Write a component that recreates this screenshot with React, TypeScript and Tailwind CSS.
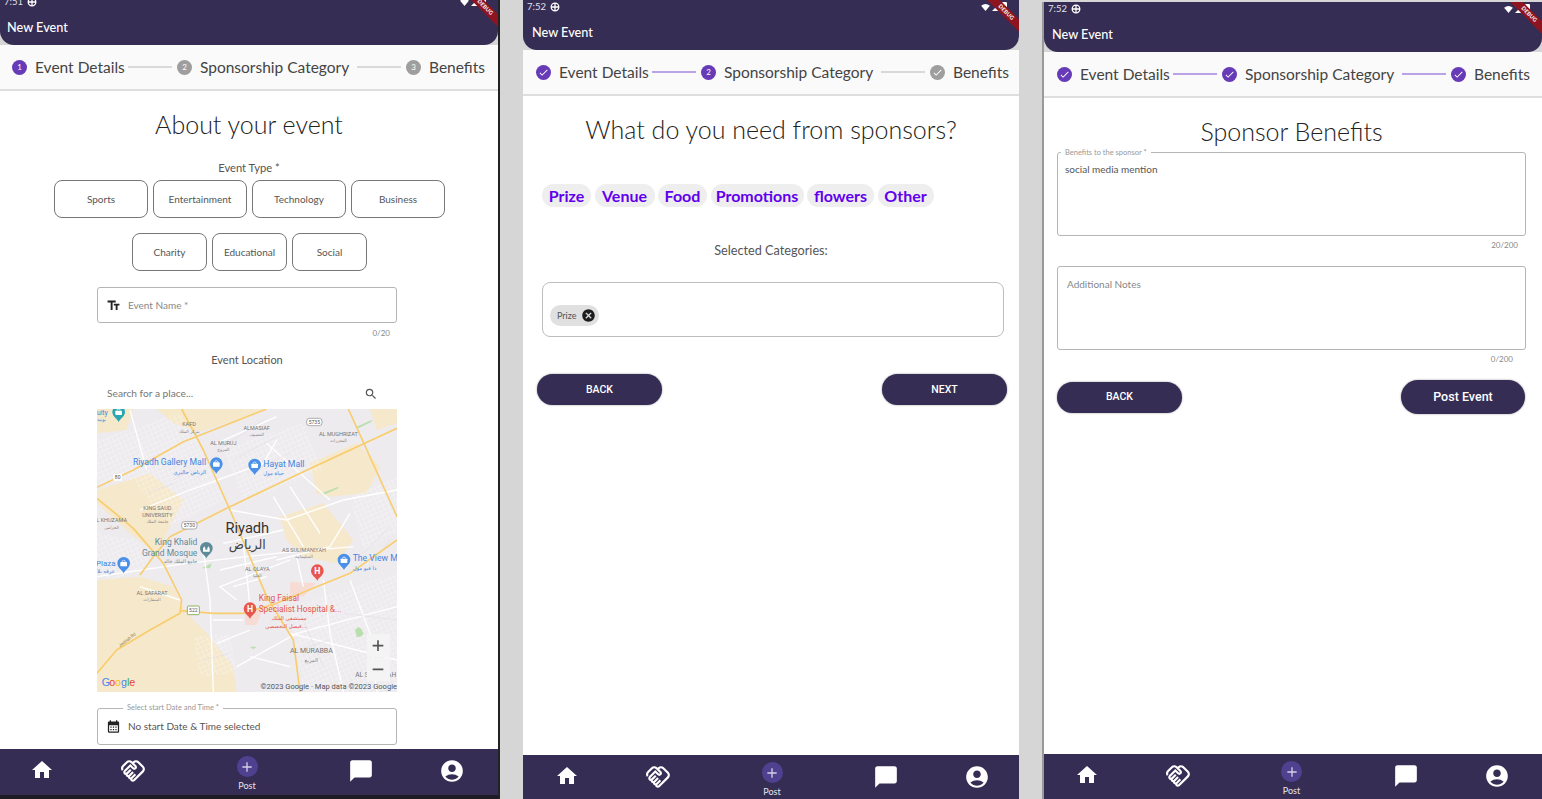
import { MdAccountCircle, MdAdd, MdCalendarMonth, MdCancel, MdChatBubble, MdCheck, MdHome, MdOutlineHandshake, MdSearch, MdTextFields } from "react-icons/md";
import type { ReactNode } from "react";

type StepState = "done" | "active" | "todo" | "grey";

const stepLabels = ["Event Details", "Sponsorship Category", "Benefits"];
const labelWidths = ["w-[88px]", "w-[152px]", "w-[56px]"];

function StepDot({ state, n }: { state: StepState; n: number }) {
  const bg = state === "done" || state === "active" ? "bg-[#673ab7]" : "bg-[#9e9e9e]";
  return (
    <span className={`grid h-[15px] w-[15px] shrink-0 place-items-center rounded-full text-[8px] text-white ${bg}`}>
      {state === "done" || state === "grey" ? <MdCheck className="h-[11px] w-[11px]" /> : n}
    </span>
  );
}

function Stepper({ states, lines, pad }: { states: StepState[]; lines: boolean[]; pad: string }) {
  return (
    <div className={`flex h-[46px] shrink-0 items-center border-b-2 border-[#dedede] bg-[#fafafa] ${pad}`}>
      {stepLabels.map((label, i) => (
        <div key={label} className="flex items-center">
          <StepDot state={states[i]} n={i + 1} />
          <span className={`ml-2 mt-[2px] whitespace-nowrap text-[15.5px] text-[#444] ${labelWidths[i]}`}>{label}</span>
          {i < 2 && <span className={`mx-[5px] h-[1.5px] w-[44px] ${lines[i] ? "bg-[#b9a3e6]" : "bg-[#d9d9d9]"}`} />}
        </div>
      ))}
    </div>
  );
}

function Ribbon() {
  return (
    <div className="absolute right-[-12px] top-[8px] flex h-[9px] w-[50px] rotate-45 items-center justify-center bg-[#8e1520] text-[5.5px] font-bold tracking-wide text-white">
      DEBUG
    </div>
  );
}

function Header({ time, titlePad }: { time: string; titlePad: string }) {
  return (
    <header className="relative h-[50px] shrink-0 overflow-hidden rounded-b-[14px] bg-[#352d54] text-white">
      <div className="flex h-[14px] items-center pl-[4px] text-[9.5px] text-[#e4e2ea]">
        <span>{time}</span>
        <svg viewBox="0 0 10 10" className="ml-[4px] h-[10px] w-[10px]" fill="none" stroke="#fff" strokeWidth="1.3">
          <circle cx="5" cy="5" r="3.8" />
          <path d="M1 5h8M5 1v8" />
        </svg>
        <div className="ml-auto mr-[12px] flex items-center gap-[2px]">
          <svg viewBox="0 0 10 8" className="h-[7px] w-[9px]" fill="#fff"><path d="M0 2Q5-2 10 2L5 8Z" /></svg>
          <svg viewBox="0 0 8 8" className="h-[8px] w-[8px]" fill="#fff"><path d="M8 0V8H0Z" /></svg>
          <span className="h-[11px] w-[5px] rounded-[1px] bg-white" />
        </div>
      </div>
      <div className={`pt-[9px] text-[12.7px] font-medium leading-[18px] ${titlePad}`}>New Event</div>
      <Ribbon />
    </header>
  );
}

function NavIcon({ children, w }: { children: ReactNode; w: string }) {
  return <div className={`flex shrink-0 justify-center ${w}`}>{children}</div>;
}

function BottomNav({ className }: { className: string }) {
  return (
    <nav className={`flex shrink-0 items-start justify-center overflow-hidden bg-[#352d54] pt-[9px] text-white ${className}`}>
      <NavIcon w="w-[91px]"><MdHome className="h-[24px] w-[24px]" /></NavIcon>
      <NavIcon w="w-[91px]"><MdOutlineHandshake className="h-[26px] w-[26px]" /></NavIcon>
      <NavIcon w="w-[137px]">
        <div className="-mt-[2px] flex flex-col items-center">
          <span className="grid h-[21px] w-[21px] place-items-center rounded-full bg-[#4f4190]">
            <MdAdd className="h-[16px] w-[16px] text-[#d5d0e6]" />
          </span>
          <span className="mt-[3px] text-[9px] leading-[11px] text-[#e6e4ec]">Post</span>
        </div>
      </NavIcon>
      <NavIcon w="w-[91px]"><MdChatBubble className="h-[26px] w-[26px]" /></NavIcon>
      <NavIcon w="w-[91px]"><MdAccountCircle className="h-[26px] w-[26px]" /></NavIcon>
    </nav>
  );
}

function TypeButton({ label, w }: { label: string; w: string }) {
  return (
    <div className={`grid h-[38px] place-items-center rounded-[8px] border border-[#777] text-[10px] text-[#555] ${w}`}>
      {label}
    </div>
  );
}

function Pin({ x, y, color, children }: { x: number; y: number; color: string; children?: ReactNode }) {
  return (
    <g transform={`translate(${x} ${y})`}>
      <path d="M0 28C-5 17-19 12-19-2A19 19 0 1 1 19-2C19 12 5 17 0 28Z" fill={color} />
      {children}
    </g>
  );
}

const Bag = () => (
  <>
    <rect x="-10" y="-6" width="20" height="13" rx="2" fill="#fff" />
    <path d="M-5-6A5 5 0 0 1 5-6" fill="none" stroke="#fff" strokeWidth="2" />
  </>
);

const HLetter = () => (
  <text x="0" y="9" textAnchor="middle" fontSize="26" fontWeight="700" fill="#fff">H</text>
);

const blueText = { fill: "#3f86e0", fontSize: 26 };

function RiyadhMap() {
  const ar = "'DejaVu Sans', sans-serif";
  return (
    <svg viewBox="21 27 900 849" className="block h-[283px] w-[300px]" fontFamily="Roboto, sans-serif">
      <defs>
        <pattern id="blocks" width="14" height="14" patternUnits="userSpaceOnUse" patternTransform="rotate(-24)">
          <path d="M0 0H14M0 0V14" stroke="#fbfafb" strokeWidth="2" fill="none" />
        </pattern>
      </defs>
      <rect x="21" y="27" width="900" height="849" fill="#eeebef" />
      {/* sand */}
      <g fill="#f6e8ca">
        <path d="M21 540 150 530 250 560 290 640 350 700 430 800 440 876H21Z" />
        <path d="M21 270 180 220 280 300 240 380 200 460 120 400 21 310Z" />
        <path d="M570 350 700 310 790 420 740 490 640 470 590 420Z" />
        <path d="M660 190 800 130 870 200 830 280 720 290 680 280Z" />
        <path d="M21 27H130L110 90 21 100Z" />
        <path d="M200 27H520L440 60 330 95 250 70Z" />
        <path d="M840 27H921V70L860 90Z" />
      </g>
      {/* housing blocks */}
      <g fill="url(#blocks)">
        <path d="M21 120 270 40 340 150 400 300 240 380 130 240 21 250Z" />
        <path d="M400 140 640 70 700 210 460 310Z" />
        <path d="M780 290 921 230V400L820 450Z" />
        <path d="M600 620 921 520V876H640Z" />
        <path d="M310 710 420 700 440 820 330 830Z" />
        <path d="M21 400 140 420 190 500 60 540 21 520Z" />
      </g>
      <path d="M600 545 680 550 640 590 600 590Z" fill="#f7dcd6" />
      <path d="M465 640 520 620 500 675 465 675Z" fill="#f7dcd6" />
      <g fill="#b9dfae">
        <path d="M335 505 365 490 360 505Z" />
        <path d="M695 280 745 260 745 265 700 285Z" />
        <path d="M800 80 845 60 845 65 805 85Z" />
        <path d="M795 690Q810 670 820 700 815 715 800 710Z" />
        <path d="M480 740H500L490 748Z" />
      </g>
      {/* streets */}
      <g fill="none" stroke="#fff" strokeWidth="4">
        <path d="M21 530 290 490 560 460 790 440" />
        <path d="M150 330 300 270 520 190 560 120" />
        <path d="M420 330 590 360 760 300 921 270" />
        <path d="M340 450 360 600 370 876" />
        <path d="M460 430 480 620" />
        <path d="M560 480 720 440 780 340" />
        <path d="M700 540 720 700 760 876" />
        <path d="M440 600 390 560 600 480" />
        <path d="M440 800 620 700 921 620" />
        <path d="M530 130 720 300" />
        <path d="M380 130 560 50" />
        <path d="M600 700 921 780" />
        <path d="M480 770 600 800" />
        <path d="M150 560 270 600" />
        <path d="M780 540 840 700 860 876" />
        <path d="M120 30 170 210" />
        <path d="M620 470 640 560" />
        <path d="M390 510 560 470M400 430 580 390M430 560 530 530M370 660 460 660M380 730 480 690M550 290 640 440M600 260 690 400" />
      </g>
      <g fill="none" stroke="#e4e0e4" strokeWidth="2">
        <path d="M400 140 520 60M430 180 560 110M470 220 600 160M330 240 280 190M250 240 310 210M170 280 250 250M560 640 700 620M590 760 720 720M630 640 700 800M760 640 921 660M800 480 900 380M840 500 900 420M340 780 420 760" />
      </g>
      {/* highways */}
      <g fill="none" stroke="#f8cd6e" strokeWidth="5" strokeLinejoin="round">
        <path d="M775 27 921 350" />
        <path d="M21 262 130 210 280 125 530 27" />
        <path d="M240 410 420 320 640 215 921 85" />
        <path d="M275 27 340 150 420 330 530 590 610 720 630 876" />
        <path d="M21 295 130 385 220 490 275 600 270 640 180 690 80 750 21 820" />
        <path d="M270 632 370 640 460 640 560 610 680 560 780 520 921 420" />
        <path d="M150 525 190 470 240 410" />
      </g>
      {/* labels */}
      <g fill="#757575" fontSize="16.5">
        <text x="297" y="78" textAnchor="middle">KAFD</text>
        <text x="400" y="134" textAnchor="middle">AL MURUJ</text>
        <text x="500" y="90" textAnchor="middle">ALMASIAF</text>
        <text x="745" y="109" textAnchor="middle">AL MUGHRIZAT</text>
        <text x="202" y="330" textAnchor="middle">KING SAUD</text>
        <text x="202" y="350" textAnchor="middle">UNIVERSITY</text>
        <text x="65" y="367" textAnchor="middle">L KHUZAMA</text>
        <text x="642" y="456" textAnchor="middle">AS SULIMANIYAH</text>
        <text x="502" y="514" textAnchor="middle">AL OLAYA</text>
        <text x="186" y="585" textAnchor="middle">AL SAFARAT</text>
        <text x="664" y="758" textAnchor="middle" fontSize="21">AL MURABBA</text>
        <text x="857" y="830" textAnchor="middle" fontSize="20">AL SINAYYAH</text>
      </g>
      <g fill="#8a8a8a" fontSize="13" fontFamily={ar}>
        <text x="297" y="100" textAnchor="middle">مركز الملك</text>
        <text x="400" y="154" textAnchor="middle">المروج</text>
        <text x="500" y="108" textAnchor="middle">المصيف</text>
        <text x="745" y="127" textAnchor="middle">المغرزات</text>
        <text x="202" y="370" textAnchor="middle">جامعة الملك</text>
        <text x="65" y="386" textAnchor="middle">الخزامى</text>
        <text x="642" y="473" textAnchor="middle">السليمانية</text>
        <text x="502" y="532" textAnchor="middle">العليا</text>
        <text x="186" y="604" textAnchor="middle">السفارات</text>
        <text x="664" y="785" textAnchor="middle" fontSize="16">المربع</text>
      </g>
      <text x="472" y="398" textAnchor="middle" fontSize="44" fill="#333">Riyadh</text>
      <text x="472" y="447" textAnchor="middle" fontSize="38" fill="#444" fontFamily={ar}>الرياض</text>
      <text x="348" y="196" textAnchor="end" {...blueText}>Riyadh Gallery Mall</text>
      <text x="348" y="222" textAnchor="end" {...blueText} fontSize="16" fontFamily={ar}>الرياض جاليري</text>
      <text x="520" y="200" {...blueText}>Hayat Mall</text>
      <text x="520" y="224" {...blueText} fontSize="16" fontFamily={ar}>حياة مول</text>
      <text x="788" y="483" {...blueText}>The View M</text>
      <text x="788" y="510" {...blueText} fontSize="16" fontFamily={ar}>ذا فيو مول</text>
      <text x="18" y="497" {...blueText} fontSize="24">Plaza</text>
      <text x="21" y="520" {...blueText} fontSize="16" fontFamily={ar}>عرقه بلا</text>
      <text x="21" y="45" {...blueText} fontSize="20">uity</text>
      <text x="21" y="64" {...blueText} fontSize="14" fontFamily={ar}>بوتيه</text>
      <text x="322" y="436" textAnchor="end" fontSize="25.5" fill="#5f8a9a">King Khalid</text>
      <text x="322" y="467" textAnchor="end" fontSize="25.5" fill="#5f8a9a">Grand Mosque</text>
      <text x="322" y="490" textAnchor="end" fontSize="15" fill="#5f8a9a" fontFamily={ar}>جامع الملك خالد</text>
      <text x="506" y="604" fontSize="25" fill="#e2574c">King Faisal</text>
      <text x="506" y="635" fontSize="25" fill="#e2574c">Specialist Hospital &amp;...</text>
      <text x="650" y="660" textAnchor="end" fontSize="16" fill="#e2574c" fontFamily={ar}>مستشفى الملك</text>
      <text x="650" y="684" textAnchor="end" fontSize="16" fill="#e2574c" fontFamily={ar}>فيصل التخصصي...</text>
      {/* shields */}
      <g fontSize="15" textAnchor="middle" fill="#555">
        <rect x="650" y="55" width="46" height="22" rx="8" fill="#fff" stroke="#888" strokeWidth="2" />
        <text x="673" y="71">5735</text>
        <rect x="275" y="365" width="46" height="22" rx="8" fill="#fff" stroke="#888" strokeWidth="2" />
        <text x="298" y="381">5730</text>
        <rect x="292" y="618" width="36" height="26" rx="3" fill="#fff" stroke="#8fb25a" strokeWidth="3" />
        <text x="310" y="637">522</text>
        <rect x="70" y="222" width="26" height="20" fill="#fff" />
        <text x="83" y="238">80</text>
      </g>
      <text x="90" y="742" fontSize="13" fill="#8a7440" transform="rotate(-38 90 742)">Jeddah Rd</text>
      {/* pins */}
      <Pin x={379} y={193} color="#4a90e8"><Bag /></Pin>
      <Pin x={494} y={197} color="#4a90e8"><Bag /></Pin>
      <Pin x={762} y={482} color="#4a90e8"><Bag /></Pin>
      <Pin x={101} y={492} color="#4a90e8"><Bag /></Pin>
      <Pin x={86} y={38} color="#2aa6b0"><Bag /></Pin>
      <Pin x={349} y={447} color="#5f8a9a">
        <path d="M-10 8V-2L-6-8-3-2V2H3V-2L6-8 10-2V8Z" fill="#fff" />
      </Pin>
      <Pin x={682} y={514} color="#e8574f"><HLetter /></Pin>
      <Pin x={480} y={628} color="#e8574f"><HLetter /></Pin>
      {/* zoom controls */}
      <rect x="830" y="702" width="70" height="70" fill="#f4f4f4" />
      <rect x="830" y="774" width="70" height="70" fill="#f4f4f4" />
      <path d="M848 737H880M864 721V753M848 808H880" stroke="#555" strokeWidth="5" />
      {/* logo + credit */}
      <g fontSize="32" fontWeight="500" fontFamily="'Liberation Sans', sans-serif">
        <text x="35" y="857" fill="#4285f4">G</text>
        <text x="58" y="857" fill="#ea4335">o</text>
        <text x="75" y="857" fill="#fbbc05">o</text>
        <text x="93" y="857" fill="#4285f4">g</text>
        <text x="111" y="857" fill="#34a853">l</text>
        <text x="118" y="857" fill="#ea4335">e</text>
      </g>
      <text x="921" y="868" textAnchor="end" fontSize="22.7" fill="#555">©2023 Google · Map data ©2023 Google</text>
    </svg>
  );
}

function EventDetails() {
  const row1 = ["Sports", "Entertainment", "Technology", "Business"];
  const row2 = ["Charity", "Educational", "Social"];
  return (
    <main className="flex flex-1 flex-col items-center overflow-hidden bg-white">
      <h1 className="mt-[15px] text-[25px] font-light leading-[36px] text-[#222]">About your event</h1>
      <p className="mt-[18px] text-[11.2px] leading-[16px] text-[#555]">Event Type *</p>
      <div className="ml-[1px] mt-[4px] flex gap-[5px]">
        {row1.map((t) => <TypeButton key={t} label={t} w="w-[94px]" />)}
      </div>
      <div className="ml-[1px] mt-[15px] flex gap-[5px]">
        {row2.map((t) => <TypeButton key={t} label={t} w="w-[75px]" />)}
      </div>
      <div className="mr-[4px] flex flex-col items-center">
        <div className="mt-[16px] flex h-[36px] w-[300px] items-center rounded-[3px] border border-[#b5b5b5] pl-[8px] text-[10px] text-[#888]">
          <MdTextFields className="h-[15px] w-[15px] text-[#222]" />
          <span className="ml-[7px]">Event Name *</span>
        </div>
        <p className="mt-[5px] w-[300px] pr-[7px] text-right text-[8px] leading-[10px] text-[#888]">0/20</p>
        <p className="mt-[14px] text-[11px] leading-[16px] text-[#555]">Event Location</p>
        <div className="mt-[17px] flex h-[18px] w-[300px] items-center pl-[10px] pr-[19px] text-[10.2px] text-[#777]">
          <span>Search for a place...</span>
          <MdSearch className="ml-auto h-[14px] w-[14px] text-[#555]" />
        </div>
        <div className="mt-[6px]"><RiyadhMap /></div>
        <div className="relative mt-[16px] flex h-[37px] w-[300px] items-center rounded-[3px] border border-[#b5b5b5] pl-[8px] text-[10px] text-[#555]">
          <span className="absolute left-[25px] top-[-6px] bg-white px-[4px] text-[7.5px] leading-[10px] text-[#999]">Select start Date and Time *</span>
          <MdCalendarMonth className="h-[15px] w-[15px] text-[#222]" />
          <span className="ml-[7px]">No start Date &amp; Time selected</span>
        </div>
      </div>
    </main>
  );
}

function PillButton({ label, className }: { label: string; className: string }) {
  return (
    <div className={`grid place-items-center rounded-full bg-[#352d54] font-['Roboto',sans-serif] font-medium text-white shadow-[0_0_2px_rgba(0,0,0,.45)] ${className}`}>
      {label}
    </div>
  );
}

function SponsorshipCategory() {
  const chips = [
    ["Prize", "w-[49px]"],
    ["Venue", "w-[60px]"],
    ["Food", "w-[49px]"],
    ["Promotions", "w-[93px]"],
    ["flowers", "w-[67px]"],
    ["Other", "w-[56px]"],
  ];
  return (
    <main className="flex flex-1 flex-col bg-white">
      <h1 className="mt-[15px] text-center text-[25px] font-light leading-[36px] text-[#222]">What do you need from sponsors?</h1>
      <div className="ml-[19px] mt-[37px] flex gap-[3.5px]">
        {chips.map(([c, w]) => (
          <span key={c} className={`grid h-[23px] place-items-center rounded-full bg-[#eeeeee] text-[16px] font-bold text-[#6200ee] ${w}`}>{c}</span>
        ))}
      </div>
      <p className="mt-[34px] text-center text-[12.7px] leading-[18px] text-[#555]">Selected Categories:</p>
      <div className="ml-[19px] mr-[15px] mt-[23px] flex h-[55px] items-end rounded-[8px] border border-[#bdbdbd] px-[7px] pb-[10px]">
        <span className="flex h-[21px] w-[49px] items-center justify-between rounded-full bg-[#e0e0e0] pl-[7px] pr-[3px] text-[9px] text-[#555]">
          Prize
          <MdCancel className="h-[15px] w-[15px] text-[#1d1d1d]" />
        </span>
      </div>
      <div className="ml-[14px] mr-[12px] mt-[37px] flex justify-between text-[10.5px]">
        <PillButton label="BACK" className="h-[31px] w-[125px]" />
        <PillButton label="NEXT" className="h-[31px] w-[125px]" />
      </div>
    </main>
  );
}

function Benefits() {
  return (
    <main className="flex flex-1 flex-col bg-white pl-[13px] pr-[16px]">
      <h1 className="mt-[15px] text-center text-[25px] font-light leading-[36px] text-[#222]">Sponsor Benefits</h1>
      <div className="relative mt-[3px] h-[84px] rounded-[3px] border border-[#b5b5b5] px-[7px] pt-[10px] text-[10px] leading-[13px] text-[#555]">
        <span className="absolute left-[3px] top-[-5px] bg-white px-[4px] text-[7.5px] leading-[10px] text-[#999]">Benefits to the sponsor *</span>
        social media mention
      </div>
      <p className="mt-[4px] pr-[8px] text-right text-[8px] leading-[10px] text-[#888]">20/200</p>
      <div className="mt-[16px] h-[84px] rounded-[3px] border border-[#b5b5b5] px-[9px] pt-[11px] text-[10px] leading-[13px] text-[#888]">
        Additional Notes
      </div>
      <p className="mt-[4px] pr-[13px] text-right text-[8px] leading-[10px] text-[#888]">0/200</p>
      <div className="mt-[16px] flex items-center justify-between pr-[1px]">
        <PillButton label="BACK" className="h-[31px] w-[125px] text-[10.5px]" />
        <PillButton label="Post Event" className="h-[34px] w-[124px] text-[12.5px]" />
      </div>
    </main>
  );
}

export default function App() {
  return (
    <div className="flex h-[799px] w-[1542px] items-start overflow-hidden bg-[#d6d6d6] font-['Lato','Noto_Sans',sans-serif]">
      <section className="-mt-[5px] flex h-[804px] w-[500px] shrink-0 flex-col border-r-2 border-[#222]">
        <Header time="7:51" titlePad="pl-[7px]" />
        <Stepper states={["active", "todo", "todo"]} lines={[false, false]} pad="pl-[12px]" />
        <EventDetails />
        <BottomNav className="h-[46px] pr-[4px]" />
        <div className="h-[4px] shrink-0 bg-[#1d1b24]" />
      </section>
      <section className="ml-[23px] flex h-[799px] w-[496px] shrink-0 flex-col">
        <Header time="7:52" titlePad="pl-[9px]" />
        <Stepper states={["done", "active", "grey"]} lines={[true, false]} pad="pl-[13px]" />
        <SponsorshipCategory />
        <BottomNav className="h-[44px] pl-[2px]" />
      </section>
      <section className="ml-[23px] mt-[2px] flex h-[797px] w-[500px] shrink-0 flex-col border-l-2 border-[#9a9a9a]">
        <Header time="7:52" titlePad="pl-[8px]" />
        <Stepper states={["done", "done", "done"]} lines={[true, true]} pad="pl-[13px]" />
        <Benefits />
        <BottomNav className="h-[45px] pr-[3px]" />
      </section>
    </div>
  );
}
